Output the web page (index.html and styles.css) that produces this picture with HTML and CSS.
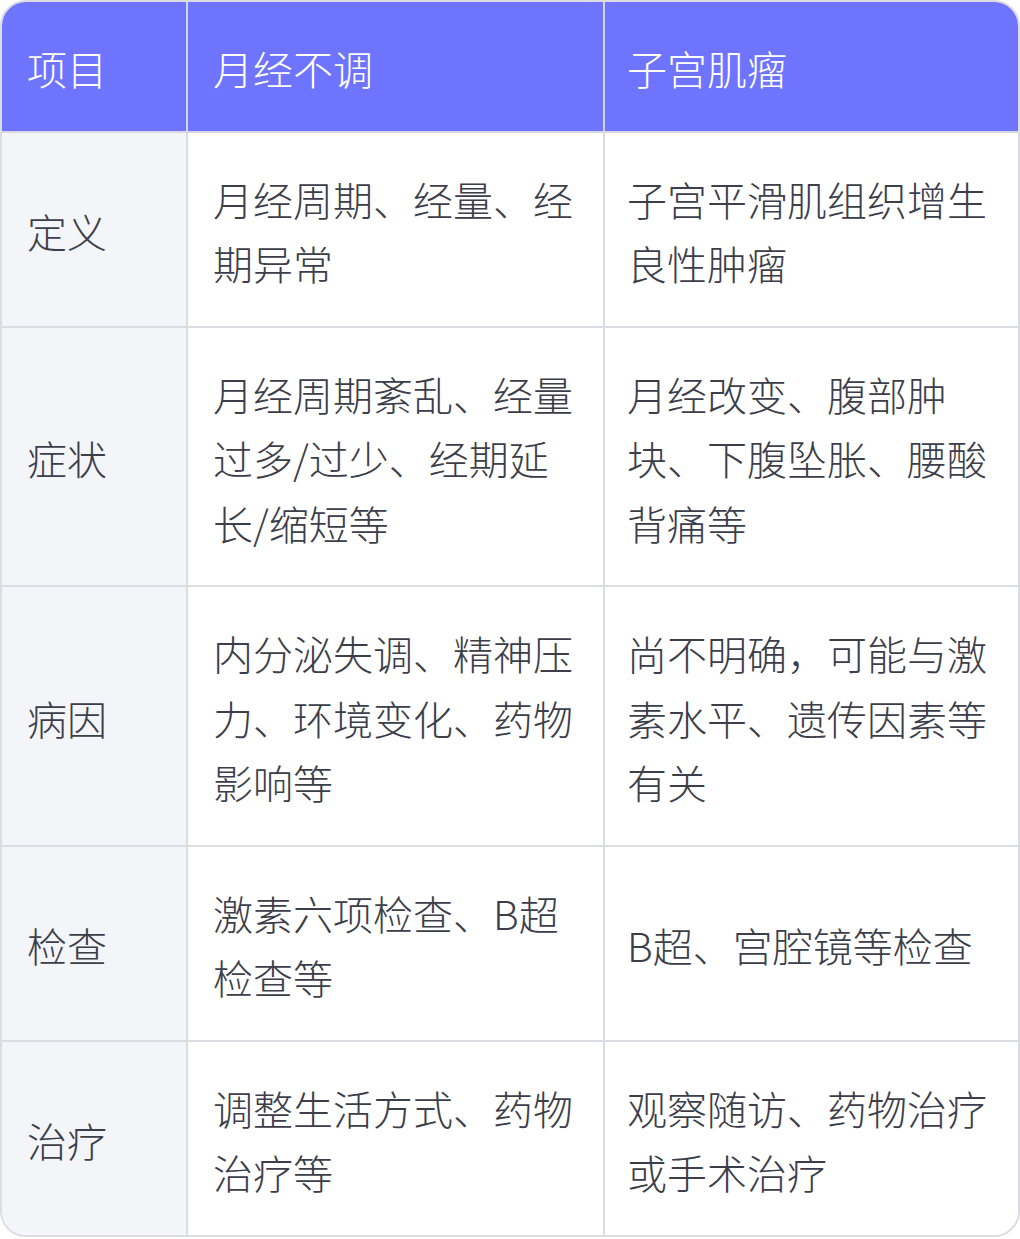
FILE: index.html
```html
<!DOCTYPE html>
<html lang="zh-CN">
<head>
<meta charset="utf-8">
<link rel="stylesheet" href="styles.css">
</head>
<body>
<div class="table">
  <div class="cell head first">项目</div>
  <div class="cell head">月经不调</div>
  <div class="cell head last">子宫肌瘤</div>

  <div class="cell label">定义</div>
  <div class="cell">月经周期、经量、经期异常</div>
  <div class="cell last">子宫平滑肌组织增生良性肿瘤</div>

  <div class="cell label">症状</div>
  <div class="cell">月经周期紊乱、经量过多/过少、经期延长/缩短等</div>
  <div class="cell last">月经改变、腹部肿块、下腹坠胀、腰酸背痛等</div>

  <div class="cell label">病因</div>
  <div class="cell">内分泌失调、精神压力、环境变化、药物影响等</div>
  <div class="cell last">尚不明确，可能与激素水平、遗传因素等有关</div>

  <div class="cell label">检查</div>
  <div class="cell">激素六项检查、B超检查等</div>
  <div class="cell last">B超、宫腔镜等检查</div>

  <div class="cell label bottom">治疗</div>
  <div class="cell bottom">调整生活方式、药物治疗等</div>
  <div class="cell last bottom">观察随访、药物治疗或手术治疗</div>
</div>
</body>
</html>
```

FILE: styles.css
```css
html, body {
  margin: 0;
  padding: 0;
  background: #ffffff;
}

body {
  font-family: "Noto Sans CJK SC", "Noto Sans", sans-serif;
  font-weight: 300;
}

.table {
  width: 1020px;
  box-sizing: border-box;
  border: 2px solid #dcdde3;
  border-radius: 26px;
  overflow: hidden;
  display: grid;
  grid-template-columns: 186px 417px 1fr;
}

.cell {
  display: flex;
  align-items: center;
  box-sizing: border-box;
  padding: 34px 24px 30px 25px;
  font-size: 40px;
  line-height: 64.5px;
  color: #3c3e4a;
  border-right: 2px solid #dcdde3;
  border-bottom: 2px solid #dcdde3;
  background: #ffffff;
}

.cell.last {
  border-right: none;
  padding-left: 22px;
  padding-right: 22px;
}

.cell.bottom {
  border-bottom: none;
}

.cell.head {
  background: #6f74fe;
  color: #ffffff;
  border-bottom-color: #d6d7e6;
  border-right-color: #d4d5e4;
}

.cell.label {
  background: #f4f5f9;
  padding-left: 25px;
}
```
